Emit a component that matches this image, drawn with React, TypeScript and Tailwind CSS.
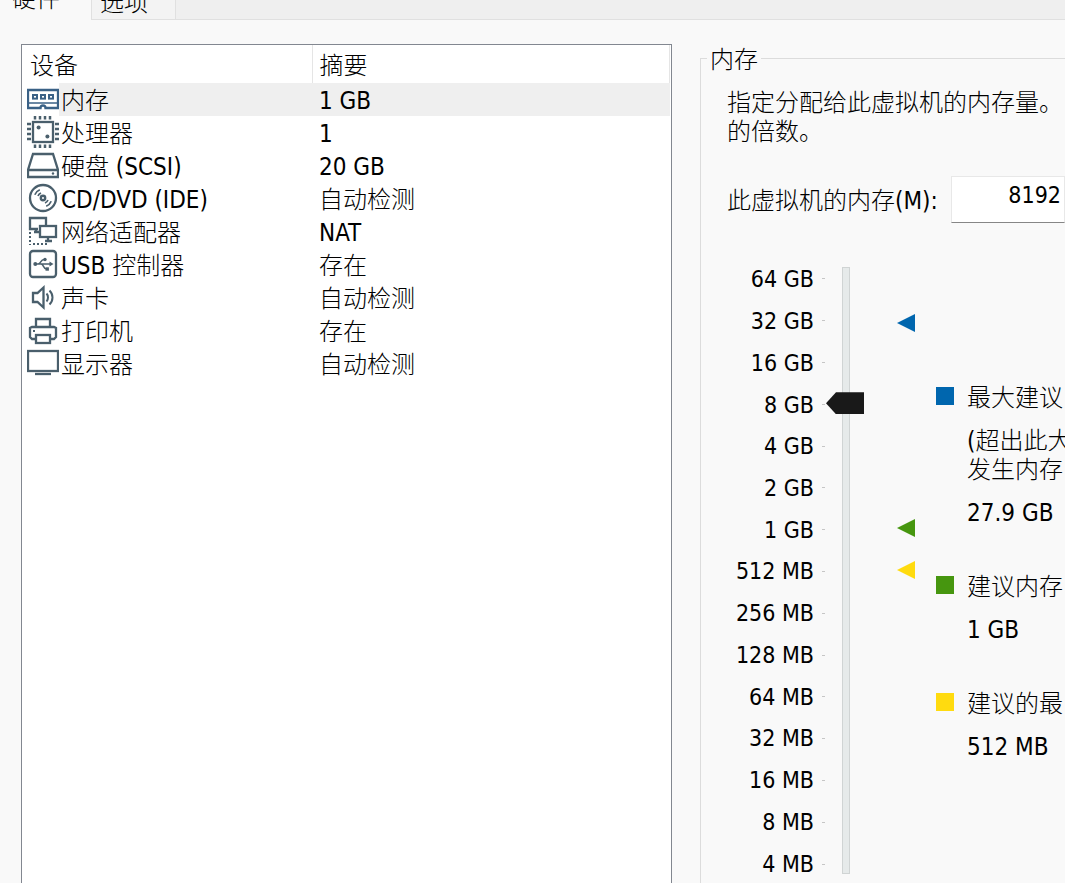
import { useState, type ReactNode } from "react";

function Icon({ color = "#4a5f6c", children }: { color?: string; children: ReactNode }) {
  return (
    <svg width="32" height="32" viewBox="0 0 32 32" fill="none" stroke={color} strokeWidth="2.3" className="shrink-0" aria-hidden="true">
      {children}
    </svg>
  );
}

const pins = [8, 13, 18, 23];

const memoryIcon = (
  <Icon color="#3a6186">
    <path d="M1 7h30v18H18.500a2.500 2.500 0 0 0-5 0H1z" fill="#fff" />
    <path d="M1 20h30" strokeWidth="1.5" />
    <rect x="6" y="12" width="4" height="3.600" strokeWidth="2" />
    <rect x="14" y="12" width="4" height="3.600" strokeWidth="2" />
    <rect x="22" y="12" width="4" height="3.600" strokeWidth="2" />
  </Icon>
);

const chipIcon = (
  <Icon>
    <rect x="6" y="6" width="20" height="20" />
    {pins.map((p) => (
      <path key={p} d={`M${p} 0v3.5M${p} 28.5v3.5M0 ${p}h4M28 ${p}h4`} strokeWidth="2.5" />
    ))}
    <circle cx="11.6" cy="11.6" r="2" fill="#4a5f6c" stroke="none" />
    <circle cx="20.4" cy="20.4" r="2" fill="#4a5f6c" stroke="none" />
  </Icon>
);

const diskIcon = (
  <Icon>
    <path d="M6 5h20l5 16v7H1v-7zM1 21h30" />
    <circle cx="26" cy="24.5" r="1.2" fill="#4a5f6c" stroke="none" />
  </Icon>
);

const discIcon = (
  <Icon>
    <circle cx="16" cy="16" r="13" />
    <circle cx="16" cy="16" r="2.2" strokeWidth="2.4" />
    <path d="M7.8 12.800a9 9 0 0 1 5-5M11 14a5.600 5.600 0 0 1 3-3M24.200 19.200a9 9 0 0 1-5 5M21 18a5.600 5.600 0 0 1-3 3" strokeWidth="1.700" />
  </Icon>
);

const networkIcon = (
  <Icon>
    <path d="M11 14H3V3h16v8M9 14v3M7 17h5" />
    <rect x="13" y="11" width="16" height="11" />
    <path d="M21 22v3M18 26h7" />
    <path d="M3 17v13" strokeWidth="2" strokeDasharray="2 2" />
    <path d="M6 29h16" strokeWidth="2" strokeDasharray="2 2" />
  </Icon>
);

const usbIcon = (
  <Icon>
    <rect x="3" y="3" width="26" height="26" rx="3" />
    <path d="M7 16h17M11 16c3 0 2.500-4.500 6-4.500M14 16c3 0 2 5 5.500 5" strokeWidth="1.5" />
    <circle cx="8.3" cy="16" r="2" fill="#4a5f6c" stroke="none" />
    <circle cx="18" cy="11.5" r="1.7" fill="#4a5f6c" stroke="none" />
    <rect x="18.5" y="19.3" width="3.4" height="3.4" fill="#4a5f6c" stroke="none" />
    <path d="M22.500 13.600l4 2.400-4 2.400z" fill="#4a5f6c" stroke="none" />
  </Icon>
);

const soundIcon = (
  <Icon>
    <path d="M6 12h4.500l6-5.500v20l-6-5.500H6z" />
    <path d="M19.500 12.500c2 2 2 6 0 8M22.500 9.500c4 4 4 10 0 14" strokeWidth="2" />
  </Icon>
);

const printerIcon = (
  <Icon>
    <path d="M9 12V5h14v7" />
    <path d="M9 25H5l-2-2v-9l2-1h22l2 1v9l-2 2h-4" />
    <rect x="9" y="21" width="14" height="8" />
    <rect x="6" y="16" width="2" height="2" fill="#4a5f6c" stroke="none" />
  </Icon>
);

const displayIcon = (
  <Icon>
    <rect x="1" y="4" width="30" height="20" />
    <path d="M8 27h16" />
  </Icon>
);

const devices = [
  { icon: memoryIcon, name: "内存", summary: "1 GB" },
  { icon: chipIcon, name: "处理器", summary: "1" },
  { icon: diskIcon, name: "硬盘 (SCSI)", summary: "20 GB" },
  { icon: discIcon, name: "CD/DVD (IDE)", summary: "自动检测" },
  { icon: networkIcon, name: "网络适配器", summary: "NAT" },
  { icon: usbIcon, name: "USB 控制器", summary: "存在" },
  { icon: soundIcon, name: "声卡", summary: "自动检测" },
  { icon: printerIcon, name: "打印机", summary: "存在" },
  { icon: displayIcon, name: "显示器", summary: "自动检测" },
];

const steps = [
  "64 GB", "32 GB", "16 GB", "8 GB", "4 GB", "2 GB", "1 GB", "512 MB",
  "256 MB", "128 MB", "64 MB", "32 MB", "16 MB", "8 MB", "4 MB",
];

const markers = [
  { mb: 31000, style: "fill-[#0066ae]" },
  { mb: 1024, style: "fill-[#46960f]" },
  { mb: 512, style: "fill-[#ffdb0f]" },
];

const legend = [
  { swatch: "bg-[#0066ae]", title: "最大建议", note: ["(超出此大", "发生内存"], value: "27.9 GB" },
  { swatch: "bg-[#46960f]", title: "建议内存", note: [], value: "1 GB" },
  { swatch: "bg-[#ffdb0f]", title: "建议的最", note: [], value: "512 MB" },
];

function DeviceList() {
  const [selected, setSelected] = useState(0);
  return (
    <section className="border border-b-0 border-[#828790] bg-white pr-px">
      <table className="w-full table-fixed border-collapse text-left">
        <colgroup>
          <col className="w-[290px]" />
          <col />
        </colgroup>
        <thead>
          <tr className="h-[38px]">
            <th className="border-r border-[#e5e5e5] p-0 pt-1 pl-2 font-light">设备</th>
            <th className="border-r border-[#e5e5e5] p-0 pt-1 pl-[7px] font-light">摘要</th>
          </tr>
        </thead>
        <tbody>
          {devices.map((d, i) => (
            <tr key={d.name} className="h-[33px]" onClick={() => setSelected(i)}>
              <td className="p-0 pl-[5px]">
                <div className="flex h-[33px] leading-9">
                  {d.icon}
                  <span className={i === selected ? "flex-1 bg-[#efefef] pl-[2px]" : "flex-1 pl-[2px]"}>
                    {d.name}
                  </span>
                </div>
              </td>
              <td className={i === selected ? "bg-[#efefef] p-0 pl-[7px]" : "p-0 pl-[7px]"}>
                <div className="h-[33px] leading-9">{d.summary}</div>
              </td>
            </tr>
          ))}
        </tbody>
      </table>
    </section>
  );
}

function MemorySlider() {
  const [level, setLevel] = useState(13);
  return (
    <div className="flex">
      <div className="-mb-[2px] grid w-[87px] grid-rows-[repeat(15,1fr)] pt-px text-[23px]">
        {steps.map((s) => (
          <span key={s} className="flex items-center justify-end whitespace-nowrap">{s}</span>
        ))}
      </div>
      <div className="-mb-[2px] ml-2 grid w-[3px] grid-rows-[repeat(15,1fr)] items-center">
        {steps.map((s) => (
          <span key={s} className="h-px bg-[#c6c6c6]" />
        ))}
      </div>
      <div className="ml-px grid w-[38px] pt-[9px] pb-[9px]">
        <div className="col-start-1 row-start-1 ml-4 w-[8px] border border-[#d0d4d4] bg-[#e6eaea]" />
        <input
          type="range"
          min={2}
          max={16}
          value={level}
          onChange={(e) => setLevel(Number(e.target.value))}
          aria-label="内存"
          className="col-start-1 row-start-1 h-full w-[38px] appearance-none bg-transparent [direction:rtl] [writing-mode:vertical-lr] [&::-webkit-slider-thumb]:h-[22px] [&::-webkit-slider-thumb]:w-[38px] [&::-webkit-slider-thumb]:appearance-none [&::-webkit-slider-thumb]:bg-[#191919] [&::-webkit-slider-thumb]:[clip-path:polygon(0_50%,10px_0,100%_0,100%_100%,10px_100%)]"
        />
      </div>
      <div className="relative mt-5 mb-[22px] ml-[33px] w-[18px]">
        {markers.map((m) => (
          <svg
            key={m.mb}
            width="18"
            height="18"
            viewBox="0 0 18 18"
            className={`absolute left-0 -translate-y-1/2 ${m.style}`}
            style={{ top: `${((16 - Math.log2(m.mb)) / 14) * 100}%` }}
            aria-hidden="true"
          >
            <path d="M0 9L18 0v18z" />
          </svg>
        ))}
      </div>
    </div>
  );
}

function Legend() {
  return (
    <ul className="ml-[21px] flex flex-1 flex-col gap-[45px] overflow-hidden pt-[126px] whitespace-nowrap">
      {legend.map((l) => (
        <li key={l.title} className="flex gap-[13px] leading-[29px]">
          <span className={`mt-[3px] size-[18px] shrink-0 ${l.swatch}`} />
          <div className="flex flex-col gap-[14px]">
            <span>{l.title}</span>
            {l.note.length > 0 && (
              <p>
                {l.note.map((line) => (
                  <span key={line} className="block">{line}</span>
                ))}
              </p>
            )}
            <span>{l.value}</span>
          </div>
        </li>
      ))}
    </ul>
  );
}

export default function App() {
  const [size, setSize] = useState("8192");
  return (
    <div className="flex min-h-screen flex-col overflow-hidden bg-[#f9f9f9] font-['DejaVu_Sans_Condensed','Noto_Sans_CJK_SC',sans-serif] text-[24px] leading-[33px] font-light text-black">
      <nav className="flex h-5 items-end overflow-hidden bg-[#efefef]">
        <button type="button" className="flex h-5 w-[91px] items-end bg-[#f9f9f9] pb-[7px] pl-3 leading-7">硬件</button>
        <button type="button" className="flex h-5 w-[85px] items-end border-x border-b border-[#e0e0e0] bg-[#f3f3f3] pb-[2px] pl-2 leading-7">选项</button>
        <div className="h-5 flex-1 border-b border-[#e0e0e0]" />
      </nav>
      <main className="grid flex-1 grid-cols-[651fr_365fr] gap-x-[28px] pt-6 pl-[21px]">
        <DeviceList />
        <fieldset className="-mt-[2px] flex min-w-0 flex-col border border-r-0 border-b-0 border-[#dcdcdc] pl-[26px]">
          <legend className="-ml-5 px-[3px] pt-1 leading-[29px]">内存</legend>
          <p className="pt-[14px] leading-[29px] whitespace-nowrap">
            指定分配给此虚拟机的内存量。<br />的倍数。
          </p>
          <div className="mt-[29px] flex items-center gap-[13px]">
            <label htmlFor="memory-size" className="pt-1 whitespace-nowrap">
              此虚拟机的内存(M):
            </label>
            <input
              id="memory-size"
              value={size}
              onChange={(e) => setSize(e.target.value)}
              className="h-[47px] min-w-0 flex-1 border border-[#e8e8e8] border-b-[#868686] bg-white pr-[3px] pb-[10px] text-right text-[23px]"
            />
          </div>
          <div className="mt-[35px] flex flex-1">
            <MemorySlider />
            <Legend />
          </div>
        </fieldset>
      </main>
    </div>
  );
}
